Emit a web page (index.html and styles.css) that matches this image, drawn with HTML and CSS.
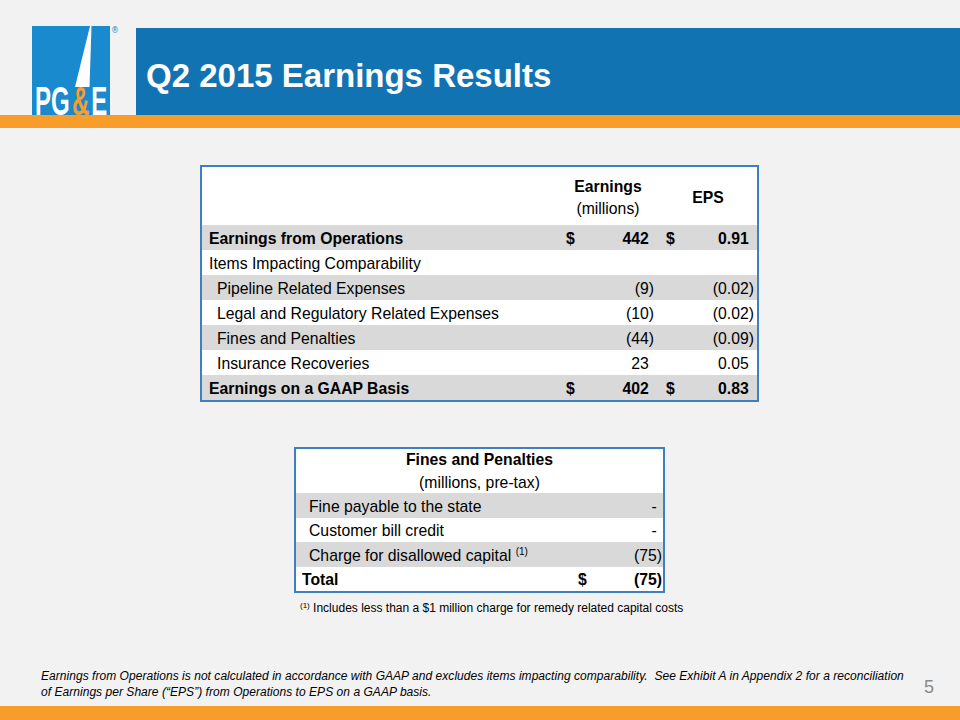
FILE: index.html
```html
<!DOCTYPE html>
<html lang="en">
<head>
<meta charset="utf-8">
<title>Q2 2015 Earnings Results</title>
<link rel="stylesheet" href="styles.css">
</head>
<body>
<div class="slide">
  <header class="top">
    <svg class="logo" width="88" height="89" viewBox="0 0 88 89" aria-label="PG&amp;E">
      <rect x="0" y="0" width="78" height="89" fill="#1a8acf"/>
      <polygon points="58,0 59.5,0 57.5,61 43,61" fill="#ffffff"/>
      <text class="lg" transform="translate(3,89) scale(0.6,1)"><tspan fill="#ffffff">PG</tspan><tspan fill="#f99d2a" dx="4">&amp;</tspan><tspan fill="#ffffff" dx="3">E</tspan></text>
      <text x="79" y="7" class="reg" fill="#4a80b4">®</text>
    </svg>
    <div class="titlebar"><h1>Q2 2015 Earnings Results</h1></div>
  </header>
  <div class="rule"></div>

  <main class="content">
    <div class="tbl1">
      <div class="hrow">
        <div class="hcell h-earn"><b>Earnings</b><span>(millions)</span></div>
        <div class="hcell h-eps"><b>EPS</b></div>
      </div>
      <div class="row grey bold">
        <div class="lbl">Earnings from Operations</div>
        <div class="d d1">$</div><div class="v">442<i class="ph">)</i></div>
        <div class="d d2">$</div><div class="v">0.91<i class="ph">)</i></div>
      </div>
      <div class="row">
        <div class="lbl">Items Impacting Comparability</div>
      </div>
      <div class="row grey">
        <div class="lbl ind">Pipeline Related Expenses</div>
        <div class="d d1"></div><div class="v">(9)</div>
        <div class="d d2"></div><div class="v">(0.02)</div>
      </div>
      <div class="row">
        <div class="lbl ind">Legal and Regulatory Related Expenses</div>
        <div class="d d1"></div><div class="v">(10)</div>
        <div class="d d2"></div><div class="v">(0.02)</div>
      </div>
      <div class="row grey">
        <div class="lbl ind">Fines and Penalties</div>
        <div class="d d1"></div><div class="v">(44)</div>
        <div class="d d2"></div><div class="v">(0.09)</div>
      </div>
      <div class="row">
        <div class="lbl ind">Insurance Recoveries</div>
        <div class="d d1"></div><div class="v">23<i class="ph">)</i></div>
        <div class="d d2"></div><div class="v">0.05<i class="ph">)</i></div>
      </div>
      <div class="row grey bold">
        <div class="lbl">Earnings on a GAAP Basis</div>
        <div class="d d1">$</div><div class="v">402<i class="ph">)</i></div>
        <div class="d d2">$</div><div class="v">0.83<i class="ph">)</i></div>
      </div>
    </div>

    <div class="tbl2">
      <div class="hrow2">
        <b>Fines and Penalties</b>
        <span>(millions, pre-tax)</span>
      </div>
      <div class="row2 grey">
        <div class="lbl2 ind2">Fine payable to the state</div>
        <div class="d"></div><div class="v">-<i class="ph">)</i></div>
      </div>
      <div class="row2">
        <div class="lbl2 ind2">Customer bill credit</div>
        <div class="d"></div><div class="v">-<i class="ph">)</i></div>
      </div>
      <div class="row2 grey">
        <div class="lbl2 ind2">Charge for disallowed capital <sup>(1)</sup></div>
        <div class="d"></div><div class="v">(75)</div>
      </div>
      <div class="row2 bold">
        <div class="lbl2">Total</div>
        <div class="d">$</div><div class="v">(75)</div>
      </div>
    </div>

    <p class="note"><sup>(1)</sup> Includes less than a $1 million charge for remedy related capital costs</p>
  </main>

  <footer class="foot">
    <p class="disc">Earnings from Operations is not calculated in accordance with GAAP and excludes items impacting comparability.&nbsp; See Exhibit A in Appendix 2 for a reconciliation<br>of Earnings per Share (“EPS”) from Operations to EPS on a GAAP basis.</p>
    <span class="pnum">5</span>
  </footer>
  <div class="rule bottom"></div>
</div>
</body>
</html>
```

FILE: styles.css
```css
* { box-sizing: border-box; }
html, body { margin: 0; padding: 0; }
body {
  background: #f2f2f2;
  font-family: "Liberation Sans", Arial, sans-serif;
  color: #000;
}
.slide {
  width: 960px;
  height: 720px;
  display: flex;
  flex-direction: column;
  overflow: hidden;
}

/* header */
.top {
  display: flex;
  align-items: flex-end;
  height: 115px;
}
.logo {
  display: block;
  margin-left: 32px;
  flex: none;
}
.logo .lg {
  font-family: "Liberation Sans", Arial, sans-serif;
  font-weight: 700;
  font-size: 40px;
}
.logo .reg {
  font-family: "DejaVu Sans", sans-serif;
  font-size: 8px;
}
.titlebar {
  flex: 1;
  height: 87px;
  margin-left: 16px;
  background: #1273b2;
}
.titlebar h1 {
  margin: 0;
  padding: 31px 0 0 10px;
  font-size: 33px;
  line-height: 33px;
  font-weight: 700;
  color: #fff;
}
.rule {
  height: 13px;
  background: #f99d2a;
  flex: none;
}
.rule.bottom { height: 14px; }

/* content */
.content {
  padding-top: 37px;
}
.tbl1 {
  margin-left: 200px;
  width: 559px;
  border: 2px solid #3d7fbf;
  background: #fff;
  font-size: 15.75px;
}
.hrow, .row {
  display: grid;
  grid-template-columns: 1fr 38px 54px 46px 54px;
  padding-right: 3px;
}
.hrow {
  height: 58px;
  align-items: center;
  padding-top: 4px;
}
.hcell {
  display: flex;
  flex-direction: column;
  align-items: center;
  line-height: 22px;
}
.h-earn { grid-column: 2 / 4; }
.h-eps { grid-column: 4 / 6; padding-left: 8px; }
.row {
  height: 25px;
  align-items: center;
  line-height: 18px;
  padding-top: 3px;
}
.grey { background: #d9d9d9; }
.bold { font-weight: 700; }
.lbl { padding-left: 7px; white-space: nowrap; }
.lbl.ind { padding-left: 15px; }
.d1 { padding-left: 4px; }
.d2 { padding-left: 12px; }
.v { text-align: right; white-space: nowrap; }
.ph { visibility: hidden; font-style: normal; }

.tbl2 {
  margin: 45px 0 0 294px;
  width: 371px;
  border: 2px solid #3d7fbf;
  background: #fff;
  font-size: 15.75px;
}
.hrow2 {
  height: 44px;
  display: flex;
  flex-direction: column;
  align-items: center;
  justify-content: center;
  line-height: 23px;
}
.row2 {
  display: grid;
  grid-template-columns: 1fr 36px 52px;
  padding-right: 1px;
  padding-top: 3px;
  height: 24.5px;
  align-items: center;
  line-height: 18px;
}
.row2 .d { padding-left: 4px; }
.lbl2 { padding-left: 6px; white-space: nowrap; }
.lbl2.ind2 { padding-left: 13px; }
.lbl2 sup {
  font-size: 10px;
  line-height: 0;
  vertical-align: 6px;
}

.note {
  margin: 8px 0 0 300px;
  font-size: 12px;
  line-height: 14px;
}
.note sup {
  font-size: 8px;
  line-height: 0;
  vertical-align: 4px;
}

/* footer */
.foot {
  margin-top: auto;
  display: flex;
  align-items: flex-end;
  padding: 0 26px 6px 41px;
}
.disc {
  margin: 0;
  flex: 1;
  font-size: 12px;
  line-height: 16px;
  font-style: italic;
  letter-spacing: 0.04px;
}
.pnum {
  font-size: 18px;
  line-height: 20px;
  color: #8a8a8a;
  margin-bottom: 3px;
}
```
